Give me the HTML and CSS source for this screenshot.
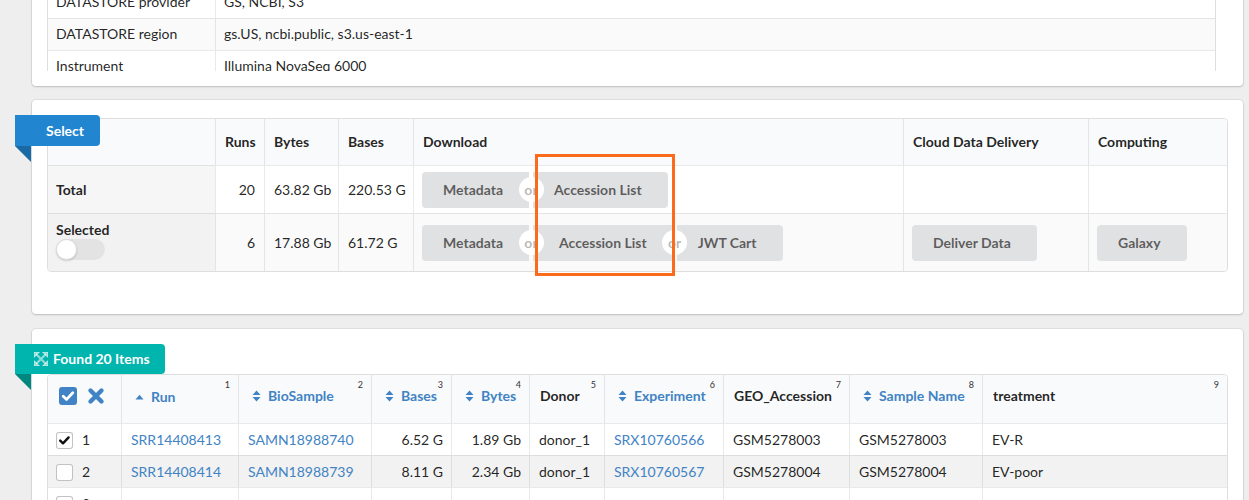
FILE: index.html
```html
<!DOCTYPE html>
<html lang="en">
<head>
<meta charset="utf-8">
<title>Run Selector</title>
<link rel="stylesheet" href="styles.css">
</head>
<body>
<div class="page">

  <section class="card card-meta">
    <div class="meta-scroll">
      <div class="tbl">
        <table class="meta">
          <colgroup><col class="m1"><col></colgroup>
          <tbody>
            <tr class="alt"><td>DATASTORE filetype</td><td>fastq, sra</td></tr>
            <tr><td>DATASTORE provider</td><td>GS, NCBI, S3</td></tr>
            <tr class="alt"><td>DATASTORE region</td><td>gs.US, ncbi.public, s3.us-east-1</td></tr>
            <tr><td>Instrument</td><td>Illumina NovaSeq 6000</td></tr>
          </tbody>
        </table>
      </div>
    </div>
  </section>

  <section class="card card-select">
    <div class="ribbon ribbon-blue">Select</div>
    <div class="tbl">
      <table class="sel">
        <colgroup>
          <col class="s1"><col class="s2"><col class="s3"><col class="s4"><col class="s5"><col class="s6"><col class="s7">
        </colgroup>
        <thead>
          <tr><th class="lead"></th><th>Runs</th><th>Bytes</th><th>Bases</th><th>Download</th><th>Cloud Data Delivery</th><th>Computing</th></tr>
        </thead>
        <tbody>
          <tr class="row-total">
            <th class="lead">Total</th>
            <td class="num">20</td><td>63.82 Gb</td><td>220.53 G</td>
            <td class="btn-cell">
              <div class="btns">
                <span class="btn">Metadata</span><span class="or"><span>or</span></span><span class="btn">Accession List</span>
              </div>
            </td>
            <td></td><td></td>
          </tr>
          <tr class="row-selected">
            <th class="lead lead-top">
              <div class="sel-label">Selected</div>
              <div class="toggle"><span class="knob"></span></div>
            </th>
            <td class="num">6</td><td>17.88 Gb</td><td>61.72 G</td>
            <td class="btn-cell">
              <div class="btns">
                <span class="btn">Metadata</span><span class="or"><span>or</span></span><span class="btn btn-mid">Accession List</span><span class="or"><span>or</span></span><span class="btn">JWT Cart</span>
              </div>
            </td>
            <td class="btn-cell"><span class="btn single">Deliver Data</span></td>
            <td class="btn-cell"><span class="btn single">Galaxy</span></td>
          </tr>
        </tbody>
      </table>
    </div>
  </section>

  <section class="card card-found">
    <div class="ribbon ribbon-teal">
      <svg class="expand" width="14" height="14" viewBox="0 0 14 14">
        <path d="M0 0H5.5L0 5.5Z M14 0V5.5L8.5 0Z M0 14V8.5L5.5 14Z M14 14H8.5L14 8.5Z"/>
        <path d="M2 2L12 12M12 2L2 12" stroke-width="2.2" fill="none"/>
      </svg>
      <span>Found 20 Items</span>
    </div>
    <div class="tbl">
      <table class="data">
        <colgroup>
          <col class="d1"><col class="d2"><col class="d3"><col class="d4"><col class="d5"><col class="d6"><col class="d7"><col class="d8"><col class="d9"><col class="d10">
        </colgroup>
        <thead>
          <tr>
            <th class="chk-head">
              <span class="hicons">
                <svg width="18" height="18" viewBox="0 0 18 18"><rect width="18" height="18" rx="3" fill="#4183c4"/><path d="M4.2 9.2L7.6 12.4L13.8 5.8" stroke="#fff" stroke-width="2.8" fill="none" stroke-linecap="round" stroke-linejoin="round"/></svg>
                <svg width="18" height="18" viewBox="0 0 18 18"><path d="M3.5 3.5L14.5 14.5M14.5 3.5L3.5 14.5" stroke="#4183c4" stroke-width="4.4" stroke-linecap="round"/></svg>
              </span>
            </th>
            <th class="sortable"><span class="hl"><svg class="caret" width="9" height="6" viewBox="0 0 9 6"><path d="M0.5 5.5L4.5 0.8L8.5 5.5Z"/></svg>Run</span><sup class="cn">1</sup></th>
            <th class="sortable"><span class="hl"><svg class="sort" width="9" height="12" viewBox="0 0 9 12"><path d="M0.5 5L4.5 0.6L8.5 5Z M0.5 7L4.5 11.4L8.5 7Z"/></svg>BioSample</span><sup class="cn">2</sup></th>
            <th class="sortable"><span class="hl"><svg class="sort" width="9" height="12" viewBox="0 0 9 12"><path d="M0.5 5L4.5 0.6L8.5 5Z M0.5 7L4.5 11.4L8.5 7Z"/></svg>Bases</span><sup class="cn">3</sup></th>
            <th class="sortable"><span class="hl"><svg class="sort" width="9" height="12" viewBox="0 0 9 12"><path d="M0.5 5L4.5 0.6L8.5 5Z M0.5 7L4.5 11.4L8.5 7Z"/></svg>Bytes</span><sup class="cn">4</sup></th>
            <th><span class="hl">Donor</span><sup class="cn">5</sup></th>
            <th class="sortable"><span class="hl"><svg class="sort" width="9" height="12" viewBox="0 0 9 12"><path d="M0.5 5L4.5 0.6L8.5 5Z M0.5 7L4.5 11.4L8.5 7Z"/></svg>Experiment</span><sup class="cn">6</sup></th>
            <th><span class="hl">GEO_Accession</span><sup class="cn">7</sup></th>
            <th class="sortable"><span class="hl"><svg class="sort" width="9" height="12" viewBox="0 0 9 12"><path d="M0.5 5L4.5 0.6L8.5 5Z M0.5 7L4.5 11.4L8.5 7Z"/></svg>Sample Name</span><sup class="cn">8</sup></th>
            <th><span class="hl">treatment</span><sup class="cn">9</sup></th>
          </tr>
        </thead>
        <tbody>
          <tr>
            <td class="chk"><span class="cbox on"><svg width="15" height="15" viewBox="0 0 15 15"><path d="M3.2 7.6L6 10.3L11.6 4.4" stroke="#111" stroke-width="2.4" fill="none" stroke-linecap="round" stroke-linejoin="round"/></svg></span><span>1</span></td>
            <td><a class="lnk">SRR14408413</a></td>
            <td><a class="lnk">SAMN18988740</a></td>
            <td class="num">6.52 G</td>
            <td class="num">1.89 Gb</td>
            <td>donor_1</td>
            <td><a class="lnk">SRX10760566</a></td>
            <td>GSM5278003</td>
            <td>GSM5278003</td>
            <td>EV-R</td>
          </tr>
          <tr class="stripe">
            <td class="chk"><span class="cbox"></span><span>2</span></td>
            <td><a class="lnk">SRR14408414</a></td>
            <td><a class="lnk">SAMN18988739</a></td>
            <td class="num">8.11 G</td>
            <td class="num">2.34 Gb</td>
            <td>donor_1</td>
            <td><a class="lnk">SRX10760567</a></td>
            <td>GSM5278004</td>
            <td>GSM5278004</td>
            <td>EV-poor</td>
          </tr>
          <tr>
            <td class="chk"><span class="cbox"></span><span>3</span></td>
            <td></td><td></td><td></td><td></td><td></td><td></td><td></td><td></td><td></td>
          </tr>
        </tbody>
      </table>
    </div>
  </section>

</div>
<div class="annot"></div>
</body>
</html>
```

FILE: styles.css
```css
* { box-sizing: border-box; }
html, body { margin: 0; padding: 0; }
body {
  background: #eeeeee;
  font-family: Lato, "Open Sans", "Liberation Sans", sans-serif;
  font-size: 14px;
  line-height: 20px;
  color: rgba(0, 0, 0, 0.87);
  height: 500px;
  overflow: hidden;
  position: relative;
}
.page { padding: 0 6px 0 32px; }

.card {
  position: relative;
  background: #fff;
  border-radius: 4px;
  box-shadow: 0 1px 2px 0 rgba(34, 36, 38, 0.18), 0 0 0 1px rgba(34, 36, 38, 0.07);
}
.card-meta { margin-top: -62px; padding: 15px 27px 15px 15px; }
.meta-scroll { height: 118px; overflow: hidden; }
.card-select { margin-top: 14px; padding: 18px 15px 42px; }
.card-found { margin-top: 15px; padding: 45px 15px 0; }

.tbl {
  border: 1px solid rgba(34, 36, 38, 0.15);
  border-radius: 4px;
  overflow: hidden;
}
table {
  width: 100%;
  border-collapse: separate;
  border-spacing: 0;
  table-layout: fixed;
}
th, td {
  border-left: 1px solid rgba(34, 36, 38, 0.1);
  border-top: 1px solid rgba(34, 36, 38, 0.1);
  text-align: left;
  vertical-align: middle;
  padding: 0 9px;
  white-space: nowrap;
}
tr > :first-child { border-left: 0; }
thead tr:first-child > *, table > tbody:first-child > tr:first-child > * { border-top: 0; }
th { font-weight: 700; }
.num { text-align: right; }

/* meta table */
.m1 { width: 167px; }
.meta td { padding: 5px 9px 6px 8px; }
.meta tr.alt td { background: #fafafa; }

/* select table */
.s1 { width: 167px; } .s2 { width: 49px; } .s3 { width: 74px; } .s4 { width: 75px; }
.s5 { width: 490px; } .s6 { width: 185px; } .s7 { width: 139px; }
.sel thead th { background: #f9fafb; height: 46px; }
.sel .row-total > * { height: 48px; }
.sel .row-selected > * { height: 58px; background: #fafafa; }
.sel .lead { padding-left: 8px; }
.sel .row-total .lead { background: #f6f6f6; }
.sel .row-selected .lead { background: #f2f2f2; }
.sel .lead-top { vertical-align: top; padding-top: 7px; }
.sel-label { line-height: 18px; }
.sel .btn-cell { padding: 0 8px; }

.toggle {
  display: flex;
  width: 49px;
  height: 21px;
  border-radius: 11px;
  background: rgba(0, 0, 0, 0.06);
}
.knob {
  width: 21px;
  height: 21px;
  border-radius: 50%;
  background: #fff;
  box-shadow: 0 1px 2px 0 rgba(34, 36, 38, 0.2), inset 0 0 0 1px rgba(34, 36, 38, 0.15);
}

.btns { display: inline-flex; vertical-align: middle; }
.btn {
  display: inline-flex;
  align-items: center;
  height: 36px;
  padding: 0 26px 0 21px;
  background: #e0e1e2;
  color: rgba(0, 0, 0, 0.6);
  font-weight: 700;
  font-size: 14px;
  line-height: 1;
}
.btn.btn-mid { padding-left: 26px; }
.btns .btn:first-child { border-radius: 4px 0 0 4px; }
.btns .btn:last-child { border-radius: 0 4px 4px 0; }
.btn.single { border-radius: 4px; vertical-align: middle; }
.or { position: relative; width: 4px; z-index: 3; }
.or > span {
  position: absolute;
  top: 50%;
  left: 50%;
  width: 25px;
  height: 25px;
  margin: -12.5px 0 0 -12.5px;
  border-radius: 50%;
  background: #fff;
  color: rgba(0, 0, 0, 0.3);
  font-weight: 700;
  font-size: 14px;
  line-height: 25px;
  text-align: center;
}

/* ribbons */
.ribbon {
  position: absolute;
  left: -17px;
  top: 15px;
  z-index: 2;
  display: flex;
  align-items: center;
  color: #fff;
  font-weight: 700;
  font-size: 14px;
  border-radius: 0 4px 4px 0;
}
.ribbon::after {
  content: "";
  position: absolute;
  top: 100%;
  left: 0;
  width: 16px;
  height: 16px;
  clip-path: polygon(0 0, 100% 0, 100% 100%);
}
.ribbon-blue { background: #2185d0; height: 31px; padding: 0 16px 0 31px; }
.ribbon-blue::after { background: #1a6aa6; }
.ribbon-teal { background: #00b5ad; height: 30px; padding: 0 15px 0 19px; gap: 5px; }
.ribbon-teal::after { background: #00877f; }
.expand { fill: rgba(255, 255, 255, 0.55); stroke: rgba(255, 255, 255, 0.55); }

/* data table */
.d1 { width: 73px; } .d2 { width: 117px; } .d3 { width: 133px; } .d4 { width: 80px; } .d5 { width: 78px; }
.d6 { width: 75px; } .d7 { width: 119px; } .d8 { width: 126px; } .d9 { width: 133px; } .d10 { width: 245px; }
.data thead th { background: #f9fafb; height: 48px; position: relative; padding: 0 10px 6px; }
.hl { display: inline-flex; align-items: center; gap: 7px; }
.sortable .hl { color: #4183c4; }
.sortable svg { fill: #4183c4; margin-left: 3px; }
.cn {
  position: absolute;
  top: 5px;
  right: 8px;
  font-size: 9px;
  line-height: 9px;
  font-weight: 400;
  color: #333;
}
.chk-head .hicons { display: flex; gap: 10px; padding-left: 1px; }
.chk-head .hicons svg { display: block; }
.data tbody td { height: 32px; padding: 0 9px; }
.data tbody td.num { padding-right: 8px; }
.data tbody tr.stripe td { background: #f2f2f2; }
.data td.chk { padding-left: 8px; }
.chk > span { vertical-align: middle; }
.cbox {
  display: inline-flex;
  align-items: center;
  justify-content: center;
  width: 17px;
  height: 17px;
  margin-right: 9px;
  border: 1px solid rgba(34, 36, 38, 0.28);
  border-radius: 3px;
  background: #fff;
}
.lnk { color: #4183c4; text-decoration: none; }

.annot {
  position: absolute;
  left: 535px;
  top: 154px;
  width: 140px;
  height: 122px;
  border: 3px solid #fb6b1b;
  z-index: 10;
}
```
